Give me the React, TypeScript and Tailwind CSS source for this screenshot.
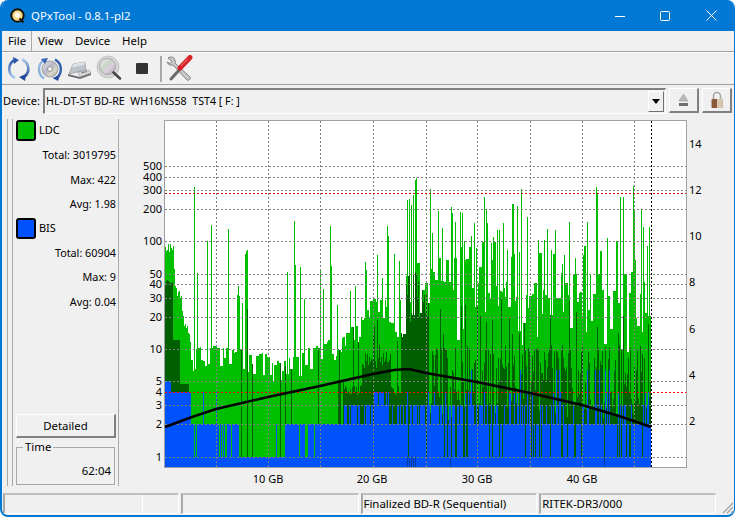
import { useMemo } from "react";

const FONT = "font-['Noto_Sans','Liberation_Sans',sans-serif]";

// seeded random so the chart stays put between runs
function rng(seed: number) {
  let s = seed;
  return () => {
    s = (s + 0x6d2b79f5) | 0;
    let t = Math.imul(s ^ (s >>> 15), 1 | s);
    t = (t + Math.imul(t ^ (t >>> 7), 61 | t)) ^ t;
    return ((t ^ (t >>> 14)) >>> 0) / 4294967296;
  };
}

function lerp(points: number[][], x: number) {
  for (let i = 1; i < points.length; i++) {
    if (x <= points[i][0]) {
      const [x0, y0] = points[i - 1];
      const [x1, y1] = points[i];
      return y0 + ((y1 - y0) * (x - x0)) / (x1 - x0);
    }
  }
  return points[points.length - 1][1];
}

const greenEnvelope = [
  [166, 245], [174, 250], [176, 290], [182, 295], [184, 320], [190, 330], [192, 350], [216, 345],
  [233, 350], [266, 355], [275, 362], [295, 358], [305, 350], [330, 342], [350, 332], [365, 315],
  [372, 300], [386, 300], [392, 325], [405, 320], [408, 250], [418, 235], [425, 270], [440, 300], [652, 310],
];

// tall spikes read off the reference: [x, top y]
const spikes: number[][] = [
  [195, 187], [198, 273], [208, 241], [212, 225], [229, 229], [238, 295], [239, 286], [246, 254], [247, 251], [248, 250],
  [288, 272], [295, 221], [296, 265], [301, 267], [321, 270], [331, 226], [332, 266], [356, 286], [366, 262], [367, 270],
  [378, 255], [388, 226], [389, 236], [395, 254], [400, 261], [408, 200], [410, 199], [412, 205], [414, 195], [416, 180], [417, 178],
  [431, 189], [433, 233], [439, 211], [443, 228], [452, 207], [453, 213], [456, 222], [461, 212], [463, 213], [466, 260],
  [475, 223], [477, 248], [485, 197], [487, 210], [488, 223], [492, 243], [494, 237], [498, 230], [500, 230], [504, 223],
  [508, 250], [513, 204], [514, 204], [518, 206], [520, 252], [522, 189], [528, 217], [539, 240], [545, 240], [548, 229],
  [552, 250], [556, 230], [565, 255], [570, 222], [576, 258], [584, 255], [588, 222], [597, 187], [598, 193], [608, 238],
  [621, 197], [624, 197], [634, 186], [635, 211], [642, 209], [644, 227], [650, 227],
];

function buildChart() {
  const r = rng(73);
  const spikeMap = new Map(spikes.map(([x, y]) => [x, y]));
  const green: string[] = [];
  const dark: string[] = [];
  const blue: string[] = [];
  let hold = 0;
  let held = 300;
  for (let x = 166; x < 652; x++) {
    const px = x + 0.5;
    let gy = lerp(greenEnvelope, x);
    if (x < 192) {
      gy += (r() - 0.5) * 10;
    } else if (x < 408) {
      if (hold <= 0) {
        const k = r();
        held = k < 0.12 ? gy - 14 - r() * 50 : k < 0.62 ? gy + (r() - 0.5) * 6 : gy + 8 + r() * 14;
        hold = k < 0.12 ? 1 : 1 + Math.floor(r() * 3);
      }
      hold--;
      gy = held;
    } else {
      // right half runs in small clumps of columns
      if (hold <= 0) {
        const k = r();
        if (k < 0.62) held = 235 + r() * 70;
        else if (k < 0.92) held = 295 + r() * 40;
        else held = 335 + r() * 25;
        hold = 1 + Math.floor(r() * 3);
      }
      hold--;
      gy = held;
    }
    const sp = spikeMap.get(x);
    if (sp) gy = sp;
    green.push(`M${px} ${Math.round(gy)}V467`);

    // dark layer
    let dy = 467;
    if (x < 174) dy = 280 + r() * 6;
    else if (x < 181) dy = 340;
    else if (x < 190) dy = 384;
    else if (x < 345) {
      if (r() < 0.07) dy = 295 + r() * 75;
      else if (x > 335 && r() < 0.3) dy = 380;
    } else if (x < 403) {
      dy = x > 362 && x < 392 ? 352 + r() * 16 : 385 + r() * 10;
      if (r() < 0.12) dy = 310 + r() * 40;
    } else if (x < 430) {
      dy = 268 + r() * 55;
    } else {
      const k = r();
      dy = k < 0.1 ? 285 + r() * 50 : k < 0.55 ? 345 + r() * 30 : 380 + r() * 40;
    }
    dark.push(`M${px} ${Math.round(Math.max(gy, dy))}V467`);

    // blue layer: integer values, so it steps on the log grid
    let by = 424;
    if (x < 172) by = 381;
    else if (x < 192) by = 392;
    else if (x < 198) by = r() < 0.3 ? 457 : 424;
    else if (x < 220) by = r() < 0.04 ? 392 : 424;
    else if (x < 233) by = r() < 0.35 ? 457 : 424;
    else if (x < 240) by = 424;
    else if (x < 268) by = r() < 0.03 ? 424 : 457;
    else if (x < 286) by = r() < 0.1 ? 424 : 457;
    else if (x < 318) by = r() < 0.2 ? 457 : 424;
    else if (x < 342) by = 424;
    else if (x < 375) by = r() < 0.3 ? 424 : 405;
    else if (x < 390) by = r() < 0.25 ? 405 : 392;
    else if (x < 406) by = r() < 0.45 ? 424 : 405;
    else {
      const k = r();
      const mid = x < 500 ? 0.6 : 0.3;
      if (k < 0.12) by = 457;
      else if (k < 0.12 + mid) by = r() < 0.18 ? 392 : 405;
      else if (k < 0.97) by = 424;
      else by = 370;
    }
    blue.push(`M${px} ${by}V467`);
  }
  // thin marks in the bottom blue band
  const marks: string[] = [];
  for (const x of [408, 410, 412, 414, 416, 451, 605]) marks.push(`M${x + 0.5} 457V467`);
  return { green: green.join(""), dark: dark.join(""), blue: blue.join(""), marks: marks.join("") };
}

const hGrid = [166, 177, 190, 209, 241, 274, 284, 298, 317, 349, 381, 405, 424, 457];
const vGrid = [217, 269, 321, 374, 427, 478, 531, 583, 635];
const leftLabels: [string, number][] = [
  ["500", 166], ["400", 177], ["300", 190], ["200", 209], ["100", 241], ["50", 274], ["40", 284], ["30", 298],
  ["20", 317], ["10", 349], ["5", 381], ["4", 392], ["3", 405], ["2", 424], ["1", 457],
];
const rightLabels: [string, number][] = [["14", 144], ["12", 190], ["10", 236], ["8", 282], ["6", 329], ["4", 375], ["2", 421]];
const bottomLabels: [string, number][] = [["10 GB", 269], ["20 GB", 373], ["30 GB", 478], ["40 GB", 583]];

function Chart() {
  const d = useMemo(buildChart, []);
  return (
    <svg width="615" height="367" viewBox="120 119 615 367" className="block shrink-0">
      <rect x="166" y="121" width="521" height="346" fill="#ffffff" />
      <path d="M165.5 121V467.5H687.5V120.5H165" fill="none" stroke="#a0a0a0" strokeWidth="1" shapeRendering="crispEdges" />
      <path d="M165 120.5H688" stroke="#a0a0a0" strokeWidth="1" shapeRendering="crispEdges" />
      <g strokeWidth="1" fill="none" shapeRendering="crispEdges">
        <path d={d.green} stroke="#00be00" />
        <path d={d.dark} stroke="#005f00" />
        <path d={d.blue} stroke="#0052ff" />
        <path d={d.marks} stroke="#003a9c" />
        <g stroke="#808080" strokeDasharray="2 2">
          {hGrid.map((y) => (
            <path key={y} d={`M166 ${y + 0.5}H687`} />
          ))}
          {vGrid.map((x) => (
            <path key={x} d={`M${x + 0.5} 121V467`} />
          ))}
        </g>
        <path d="M166 193.5H687" stroke="#c00000" strokeDasharray="2 2" />
        <path d="M166 392.5H687" stroke="#ff0000" strokeDasharray="2 2" />
        <path d="M652.5 121V467" stroke="#000000" strokeDasharray="2 2" />
      </g>
      <path
        d="M166 427L193 417L217 409L269 397L321 386L374 374L395 370L410 369L427 373L478 382L531 393L583 405L620 416L652 427"
        fill="none"
        stroke="#000000"
        strokeWidth="2.6"
      />
      <g fontFamily="'Noto Sans','Liberation Sans',sans-serif" fontSize="11" fill="#000000">
        {leftLabels.map(([t, y]) => (
          <text key={t} x="163" y={y + 4} textAnchor="end">{t}</text>
        ))}
        {rightLabels.map(([t, y]) => (
          <text key={t} x="690" y={y + 4}>{t}</text>
        ))}
        {bottomLabels.map(([t, x]) => (
          <text key={t} x={x} y="483" textAnchor="middle">{t}</text>
        ))}
      </g>
    </svg>
  );
}

function AppIcon() {
  return (
    <svg width="16" height="16" viewBox="0 0 16 16" className="shrink-0">
      <circle cx="7.5" cy="7.5" r="6.2" fill="#f6d98a" stroke="#1a1208" strokeWidth="2" />
      <circle cx="7.5" cy="7" r="2.6" fill="#fffdf0" />
      <path d="M9.5 10.5L13.5 14.5" stroke="#1a1208" strokeWidth="2.2" />
    </svg>
  );
}

function RefreshIcon() {
  return (
    <svg width="26" height="26" viewBox="0 0 26 26">
      <defs>
        <linearGradient id="arcL" x1="0" y1="0" x2="0" y2="1">
          <stop offset="0" stopColor="#2a58a8" />
          <stop offset="1" stopColor="#a8c8ea" />
        </linearGradient>
        <linearGradient id="arcR" x1="0" y1="0" x2="0" y2="1">
          <stop offset="0" stopColor="#a8c8ea" />
          <stop offset="1" stopColor="#23479a" />
        </linearGradient>
      </defs>
      <path d="M10 3.5A10 10 0 0 0 9 22" fill="none" stroke="url(#arcL)" strokeWidth="2.6" />
      <path d="M7 1L13 4L8 8Z" fill="#2a58a8" />
      <path d="M16 3.5A10 10 0 0 1 18 21" fill="none" stroke="url(#arcR)" strokeWidth="2.6" />
      <path d="M20 18L19 25L13 21Z" fill="#23479a" />
    </svg>
  );
}

function DiscRefreshIcon() {
  return (
    <svg width="26" height="26" viewBox="0 0 26 26">
      <defs>
        <linearGradient id="discA" x1="0" y1="0" x2="1" y2="1">
          <stop offset="0" stopColor="#e8e8e8" />
          <stop offset="0.45" stopColor="#b9b4c4" />
          <stop offset="0.7" stopColor="#d8d8c8" />
          <stop offset="1" stopColor="#8f8f8f" />
        </linearGradient>
      </defs>
      <circle cx="13" cy="13" r="8" fill="url(#discA)" stroke="#8a8a8a" strokeWidth="0.7" />
      <circle cx="13" cy="13" r="2.4" fill="#f4f4f4" stroke="#777777" strokeWidth="0.7" />
      <path d="M8 3.5A11 11 0 0 0 7 22.5" fill="none" stroke="#8fb4e0" strokeWidth="2.4" />
      <path d="M4 3L11 2L8 8Z" fill="#3564b0" />
      <path d="M18 3.5A11 11 0 0 1 19.5 22" fill="none" stroke="#2f5cab" strokeWidth="2.4" />
      <path d="M23 19L21 25L15.5 22Z" fill="#244e9e" />
    </svg>
  );
}

function DriveIcon() {
  return (
    <svg width="26" height="26" viewBox="0 0 26 26">
      <path d="M3 18L7 8L19 6L20 14Z" fill="#bcc3ca" stroke="#8b929a" strokeWidth="0.6" />
      <path d="M7 8L19 6L18 9L6 11.500Z" fill="#dfe3e7" />
      <path d="M2 18L14 21L25 17V19L14 23L2 20Z" fill="#6a6e73" />
      <path d="M12 16L23 14L25 17L14 20.500Z" fill="#dadada" stroke="#7c7c7c" strokeWidth="0.5" />
      <path d="M15 17L21 15.500" stroke="#7c7c7c" strokeWidth="1.200" />
    </svg>
  );
}

function LensIcon() {
  return (
    <svg width="27" height="27" viewBox="0 0 27 27">
      <defs>
        <linearGradient id="lensA" x1="0" y1="0" x2="1" y2="1">
          <stop offset="0" stopColor="#f4f4f4" />
          <stop offset="0.4" stopColor="#c8d6c4" />
          <stop offset="0.6" stopColor="#dccfde" />
          <stop offset="1" stopColor="#a8a8a8" />
        </linearGradient>
      </defs>
      <circle cx="12" cy="12" r="11" fill="#d6d6d6" stroke="#b0b0b0" strokeWidth="0.6" />
      <circle cx="11.500" cy="11.500" r="8" fill="url(#lensA)" stroke="#9a9a9a" strokeWidth="0.8" />
      <path d="M17.500 17.500L24 23.500" stroke="#474747" strokeWidth="2.600" strokeLinecap="round" />
    </svg>
  );
}

function ToolsIcon() {
  return (
    <svg width="27" height="27" viewBox="0 0 27 27">
      <path
        d="M2 3C5 1 8 2 9 5C9.500 6.500 9 8 9 8L24 22C25 24 23 26 21 25L7 10C5 10.500 2 10 1 7L4 8.500L6 6.500Z"
        fill="#c9c9c9"
        stroke="#6c6c6c"
        strokeWidth="0.8"
      />
      <path d="M5 24L15 13" stroke="#6a6a6a" strokeWidth="3" strokeLinecap="round" />
      <path d="M14 13L24 2.500" stroke="#d6232a" strokeWidth="5" strokeLinecap="round" />
      <path d="M15 11L22 3.500" stroke="#f47a7a" strokeWidth="1" />
    </svg>
  );
}

function StatRow({ text }: { text: string }) {
  return <div className="h-[24.500px] text-right text-[10.8px] leading-[24.500px]">{text}</div>;
}

function Swatch({ color, label }: { color: string; label: string }) {
  return (
    <div className="flex h-[21px] items-center gap-[3px]">
      <div className={`h-[21px] w-[20px] rounded-[3px] border-2 border-black ${color}`} />
      <span className="text-[11px]">{label}</span>
    </div>
  );
}

function RaisedButton({ children }: { children: React.ReactNode }) {
  return (
    <div className="flex h-[25px] w-[30px] items-center justify-center border-t border-l border-t-white border-l-white border-r-2 border-b-2 border-r-[#808080] border-b-[#808080] bg-[#f0f0f0]">
      {children}
    </div>
  );
}

function StatusCell({ className, children }: { className: string; children?: React.ReactNode }) {
  return (
    <div className={`flex h-[21px] items-center truncate border-t-2 border-l-2 border-t-[#c0c0c0] border-l-[#a8a8a8] border-r border-b border-r-white border-b-white pl-[1px] ${className}`}>
      {children}
    </div>
  );
}

export default function App() {
  return (
    <div className={`h-[517px] w-[735px] overflow-hidden bg-white text-[11.4px] text-black ${FONT}`}>
      <div className="flex h-full w-full flex-col overflow-hidden rounded-[8px] border-r border-b-2 border-l-2 border-[#0078d4] bg-[#f0f0f0]">
        {/* Title bar */}
        <div className="-mx-[2px] flex h-[31px] shrink-0 items-center bg-[#0078d4] pl-[10px] text-white">
          <AppIcon />
          <span className="ml-[5px] text-[11.4px]">QPxTool - 0.8.1-pl2</span>
          <div className="ml-auto flex items-center pr-[19px]">
            <svg width="10" height="10" viewBox="0 0 10 10" className="mr-[35px]">
              <path d="M0 5.500H10" stroke="#ffffff" />
            </svg>
            <svg width="10" height="10" viewBox="0 0 10 10" className="mr-[36px]">
              <rect x="0.500" y="0.500" width="9" height="9" rx="1" fill="none" stroke="#ffffff" />
            </svg>
            <svg width="11" height="11" viewBox="0 0 11 11">
              <path d="M0.500 0.500L10.500 10.500M10.500 0.500L0.500 10.500" stroke="#ffffff" />
            </svg>
          </div>
        </div>

        {/* Menu */}
        <div className="flex h-[21px] shrink-0 items-stretch border-b border-[#a0a0a0] pl-[1px]">
          <div className="flex w-[29px] items-center justify-center border-r border-[#a8a8a8]">File</div>
          <div className="ml-[6px] flex items-center">View</div>
          <div className="ml-[12px] flex items-center">Device</div>
          <div className="ml-[12px] flex items-center">Help</div>
        </div>

        {/* Toolbar */}
        <div className="flex h-[33px] shrink-0 items-center border-t border-b border-t-white border-b-[#a0a0a0] pl-[4px]">
          <RefreshIcon />
          <div className="ml-[5px]"><DiscRefreshIcon /></div>
          <div className="ml-[3px]"><DriveIcon /></div>
          <div className="ml-[4px]"><LensIcon /></div>
          <div className="ml-[13px] h-[11px] w-[12px] rounded-[1px] bg-[#333333]" />
          <div className="ml-[12px] h-[26px] w-[2px] bg-[#a8a8a8]" />
          <div className="ml-[4px]"><ToolsIcon /></div>
        </div>

        {/* Device row */}
        <div className="flex h-[34px] shrink-0 items-start pt-[3px] pl-[1px]">
          <span className="mt-[5px] w-[40px] text-[11px]">Device:</span>
          <div className="flex h-[26px] w-[623px] items-center border-t-2 border-l-2 border-t-[#808080] border-l-[#808080] border-r border-b border-r-white border-b-white bg-[#f0f0f0] pl-[1px]">
            <span className="text-[10.7px] whitespace-pre">HL-DT-ST BD-RE  WH16NS58  TST4 [ F: ]</span>
            <div className="ml-auto mr-[1px] flex h-[21px] w-[16px] items-center justify-center border-t border-l border-t-white border-l-white border-r border-b border-r-[#707070] border-b-[#707070]">
              <svg width="8" height="5" viewBox="0 0 8 5">
                <path d="M0 0H8L4 5Z" fill="#000000" />
              </svg>
            </div>
          </div>
          <div className="ml-[3px]">
            <RaisedButton>
              <svg width="11" height="14" viewBox="0 0 11 14">
                <path d="M5.500 1L10 8H1Z" fill="#b8b8b8" stroke="#9a9a9a" strokeWidth="0.6" />
                <rect x="1" y="10" width="9" height="3" fill="#6f6f6f" />
              </svg>
            </RaisedButton>
          </div>
          <div className="ml-[3px]">
            <RaisedButton>
              <svg width="14" height="18" viewBox="0 0 14 18">
                <path d="M3.500 8V5A3.500 3.500 0 0 1 10.500 5V8" fill="none" stroke="#a8a8a8" strokeWidth="1.6" />
                <rect x="1.500" y="8" width="11" height="9" rx="1" fill="#8b5a3a" />
                <rect x="7" y="8" width="5.500" height="9" fill="#d9c6ae" />
              </svg>
            </RaisedButton>
          </div>
        </div>

        {/* Main */}
        <div className="flex h-[367px] shrink-0 items-stretch pl-[5px]">
          <div className="w-[6px] border-x border-[#a8a8a8]" />
          <div className="flex w-[107px] flex-col border-r border-[#a8a8a8] pr-[2px] pl-[3px]">
            <div className="pt-[1px]"><Swatch color="bg-[#00be00]" label="LDC" /></div>
            <div className="pt-[2px]">
              <StatRow text="Total: 3019795" />
              <StatRow text="Max: 422" />
              <StatRow text="Avg: 1.98" />
            </div>
            <div className="pt-[1px]"><Swatch color="bg-[#0052ff]" label="BIS" /></div>
            <div className="pt-[2px]">
              <StatRow text="Total: 60904" />
              <StatRow text="Max: 9" />
              <StatRow text="Avg: 0.04" />
            </div>
            <div className="mt-auto flex h-[24px] w-[100px] items-center justify-center border-t border-l border-t-white border-l-white border-r-2 border-b-2 border-r-[#808080] border-b-[#808080]">
              Detailed
            </div>
            <div className="relative mt-[9px] mb-[1px] flex h-[38px] w-[99px] items-end justify-end border border-[#a8a8a8] pr-[3px] pb-[5px]">
              <span className="absolute -top-[8px] left-[6px] bg-[#f0f0f0] px-[2px] leading-[14px]">Time</span>
              62:04
            </div>
          </div>
          <Chart />
        </div>

        {/* Status bar */}
        <div className="mt-[7px] flex items-start gap-[2px] pl-[1px]">
          <StatusCell className="w-[176px]">
            <div className="-mt-[2px] h-[20px] w-[137px] self-start border-t-2 border-r border-t-[#a0a0a0] border-r-white" />
          </StatusCell>
          <StatusCell className="w-[178px]" />
          <StatusCell className="w-[177px]">Finalized BD-R (Sequential)</StatusCell>
          <StatusCell className="w-[177px]">RITEK-DR3/000</StatusCell>
          <svg width="14" height="14" viewBox="0 0 14 14" className="mt-[7px] ml-[2px]">
            <path d="M13 3L3 13M13 7L7 13M13 11L11 13" stroke="#a0a0a0" strokeWidth="1.200" />
          </svg>
        </div>
      </div>
    </div>
  );
}
